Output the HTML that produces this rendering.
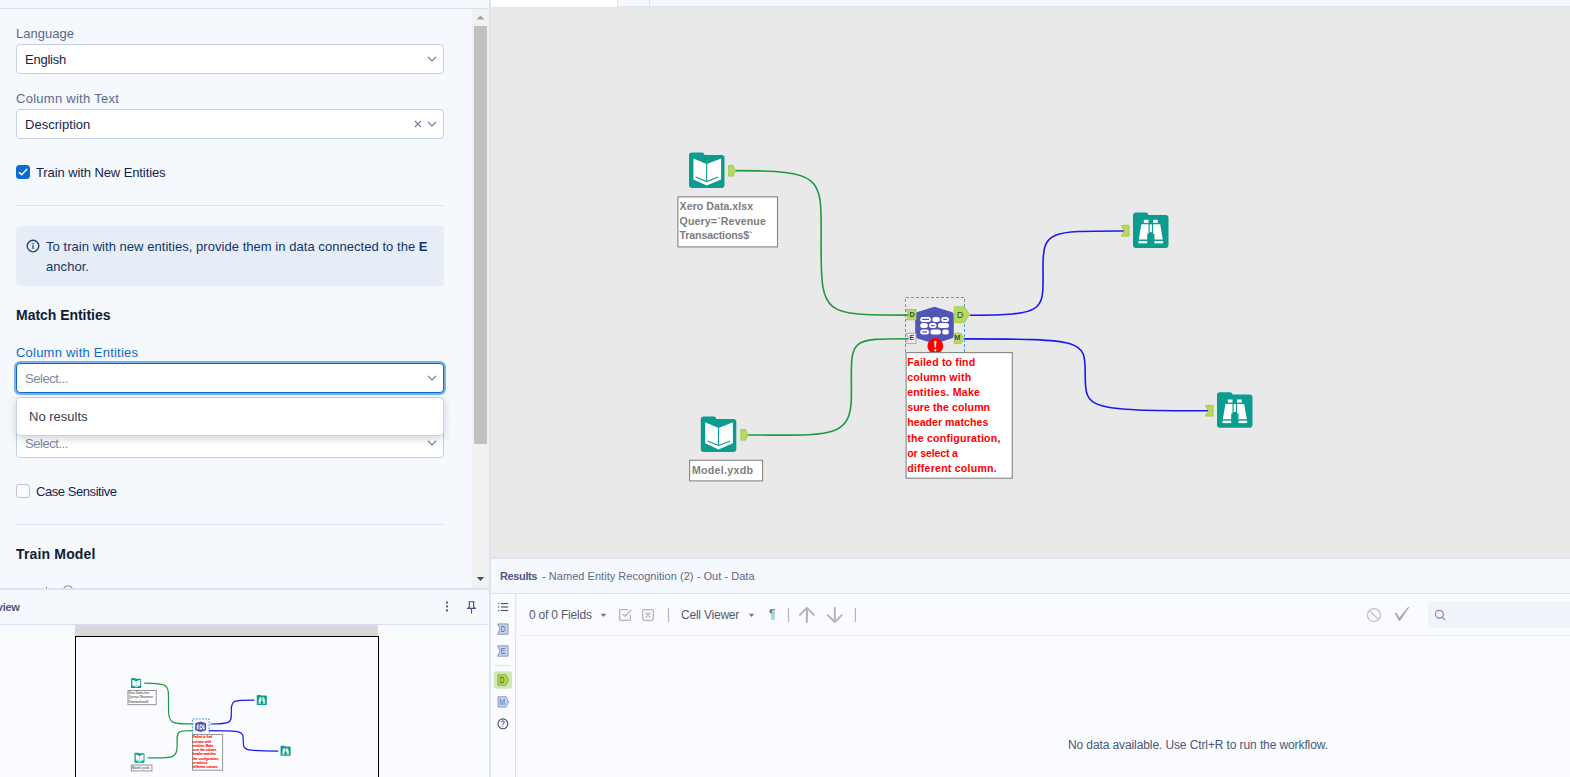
<!DOCTYPE html>
<html><head><meta charset="utf-8"><title>Designer</title>
<style>
*{box-sizing:border-box;margin:0;padding:0}
html,body{width:1570px;height:777px;overflow:hidden;background:#f5f8fd;font-family:"Liberation Sans",sans-serif;color:#0c2651}
.abs{position:absolute}
#left{position:absolute;left:0;top:0;width:489px;height:588px;background:#f5f8fd;overflow:hidden}
#canvas{position:absolute;left:491px;top:7px;width:1079px;height:550px;background:#e9e9e9;overflow:hidden}
#results{position:absolute;left:491px;top:559px;width:1079px;height:218px;background:#f5f8fd;overflow:hidden}
#overview{position:absolute;left:0;top:590px;width:489px;height:187px;background:#f5f8fd;overflow:hidden}
.vdiv{position:absolute;left:489px;top:0;width:2px;height:777px;background:#dce4f2}
.t{position:absolute;white-space:nowrap;line-height:1}
.lbl{font-size:13px;color:#5b6b8a}
.val{font-size:13px;color:#13264d}
.ph{font-size:13px;color:#7c89a6}
.sel{position:absolute;left:16px;width:428px;height:30px;background:#fff;border:1px solid #c3cfe6;border-radius:4px}
.h{font-size:14px;font-weight:bold;color:#101c33}
.hr{position:absolute;left:16px;width:428px;height:1px;background:#dde4f0}
svg{position:absolute;overflow:visible}
.conn{stroke-width:1.6}
.ann{font-family:"Liberation Sans",sans-serif;font-size:10.6px;font-weight:bold}
.mini .conn{stroke-width:4.3}
.mini .dash{stroke-width:3;stroke-dasharray:7,4}
.mini .abox{stroke-width:3.3;stroke:#8c8c8c}
.mini .ann{stroke-width:0.3px}
.ann{stroke-width:0}
.mini .nm{display:none}
</style></head><body>
<div id="left">
  <div class="abs" style="left:0;top:8px;width:489px;height:1px;background:#d7dff0;z-index:3"></div>
  <div class="t lbl" style="left:16px;top:27px;letter-spacing:0.022px;">Language</div>
  <div class="sel" style="top:44px"></div>
  <div class="t val" style="left:25px;top:53px;letter-spacing:-0.240px;">English</div>
  <svg style="left:427px;top:56px" width="10" height="6" viewBox="0 0 10 6"><path d="M1,0.9 L5,4.9 L9,0.9" fill="none" stroke="#6f7d9c" stroke-width="1.25"/></svg>
  <div class="t lbl" style="left:16px;top:92px;letter-spacing:0.270px;">Column with Text</div>
  <div class="sel" style="top:109px"></div>
  <div class="t val" style="left:25px;top:118px;letter-spacing:0.027px;">Description</div>
  <svg style="left:414px;top:120px" width="8" height="8" viewBox="0 0 8 8"><path d="M0.9,0.9 L7,7 M7,0.9 L0.9,7" fill="none" stroke="#6f7d9c" stroke-width="1.2"/></svg>
  <svg style="left:427px;top:121px" width="10" height="6" viewBox="0 0 10 6"><path d="M1,0.9 L5,4.9 L9,0.9" fill="none" stroke="#6f7d9c" stroke-width="1.25"/></svg>
  <div class="abs" style="left:16px;top:165px;width:14px;height:14px;background:#0c6cd0;border-radius:3.5px"></div>
  <svg style="left:16px;top:165px" width="14" height="14" viewBox="0 0 14 14"><path d="M3.3,7.5 L5.6,9.7 L10.8,4.3" fill="none" stroke="#fff" stroke-width="1.5" stroke-linecap="round" stroke-linejoin="round"/></svg>
  <div class="t val" style="left:36px;top:166px;letter-spacing:-0.097px;">Train with New Entities</div>
  <div class="hr" style="top:205px"></div>
  <div class="abs" style="left:16px;top:226px;width:428px;height:60px;background:#e6edf7;border-radius:4px"></div>
  <svg style="left:26px;top:239px" width="14" height="14" viewBox="0 0 14 14"><circle cx="7" cy="7" r="5.8" fill="none" stroke="#1d4275" stroke-width="1.35"/><rect x="6.35" y="6.2" width="1.3" height="3.8" fill="#1d4275"/><rect x="6.35" y="3.9" width="1.3" height="1.4" fill="#1d4275"/></svg>
  <div class="t val" style="left:46px;top:240px;letter-spacing:0.043px;color:#12356b;">To train with new entities, provide them in data connected to the <b>E</b></div>
  <div class="t val" style="left:46px;top:260px;letter-spacing:0.057px;color:#12356b;">anchor.</div>
  <div class="t h" style="left:16px;top:308px;letter-spacing:-0.031px;">Match Entities</div>
  <div class="t lbl" style="left:16px;top:346px;letter-spacing:0.222px;color:#1268c8;">Column with Entities</div>
  <div class="sel" style="top:428px"></div>
  <div class="t ph" style="left:25px;top:437px;letter-spacing:-0.446px;">Select...</div>
  <svg style="left:427px;top:440px" width="10" height="6" viewBox="0 0 10 6"><path d="M1,0.9 L5,4.9 L9,0.9" fill="none" stroke="#6f7d9c" stroke-width="1.25"/></svg>
  <div class="sel" style="top:363px;border-color:#0a6acb;box-shadow:0 0 0 2px rgba(25,118,210,.55)"></div>
  <div class="t ph" style="left:25px;top:372px;letter-spacing:-0.446px;">Select...</div>
  <svg style="left:427px;top:375px" width="10" height="6" viewBox="0 0 10 6"><path d="M1,0.9 L5,4.9 L9,0.9" fill="none" stroke="#6f7d9c" stroke-width="1.25"/></svg>
  <div class="abs" style="left:16px;top:397px;width:428px;height:39px;background:#fff;border:1px solid #c7d2e8;border-radius:4px;box-shadow:0 3px 8px rgba(40,50,80,.2)"></div>
  <div class="t val" style="left:29px;top:410px;letter-spacing:-0.003px;color:#343d4f;">No results</div>
  <div class="abs" style="left:16px;top:484px;width:14px;height:14px;background:#f9fbfe;border:1px solid #b9c5dc;border-radius:3px"></div>
  <div class="t val" style="left:36px;top:485px;letter-spacing:-0.440px;">Case Sensitive</div>
  <div class="hr" style="top:524px"></div>
  <div class="t h" style="left:16px;top:547px;letter-spacing:0.160px;">Train Model</div>
  <div class="abs" style="left:46px;top:587px;width:1.3px;height:1px;background:#3d4f9a"></div>
  <svg style="left:62px;top:585px" width="12" height="12" viewBox="0 0 12 12"><circle cx="6" cy="5.5" r="4.7" fill="none" stroke="#7f899c" stroke-width="1.1"/></svg>
  <!-- scrollbar -->
  <div class="abs" style="left:472px;top:9px;width:17px;height:579px;background:#f1f1f1"></div>
  <div class="abs" style="left:474px;top:26px;width:13px;height:418px;background:#c1c1c1"></div>
  <svg style="left:476px;top:15px" width="9" height="5" viewBox="0 0 9 5"><path d="M0.5,4.6 L4.5,0.6 L8.5,4.6 Z" fill="#a3a3a3"/></svg>
  <svg style="left:476px;top:577px" width="9" height="5" viewBox="0 0 9 5"><path d="M0.8,0 L4.5,4 L8.2,0 Z" fill="#505050"/></svg>
</div>
<div class="abs" style="left:0;top:588px;width:489px;height:2px;background:#dce4f2"></div>
<div id="overview">
  <div class="t " style="right:469.4px;top:11.5px;font-size:11px;font-weight:bold;color:#4a5a80;letter-spacing:-0.25px;">Overview</div>
  <svg style="left:445px;top:11px" width="4" height="11" viewBox="0 0 4 11"><circle cx="2" cy="1.6" r="1.1" fill="#3e4f78"/><circle cx="2" cy="5.5" r="1.1" fill="#3e4f78"/><circle cx="2" cy="9.4" r="1.1" fill="#3e4f78"/></svg>
  <svg style="left:466px;top:11px" width="11" height="13" viewBox="0 0 11 13"><path d="M2.4,0.7 H8.6 M3.4,0.7 V5.7 L1.8,7.4 H9.2 L7.6,5.7 V0.7 M5.5,7.4 V12.6" fill="none" stroke="#42537d" stroke-width="1.1"/></svg>
  <div class="abs" style="left:0;top:34px;width:489px;height:1px;background:#d7dff0"></div>
  <div class="abs" style="left:0;top:35px;width:489px;height:152px;background:#f9fbfe"></div>
  <div class="abs" style="left:75px;top:35px;width:303px;height:11px;background:#d9d9d9"></div>
  <div class="abs" style="left:75px;top:46px;width:304px;height:150px;border:1.3px solid #000;background:#f9fbfe"></div>
  <svg class="mini" style="left:0;top:0" width="489" height="187" viewBox="0 0 489 187"><g transform="translate(-63.87,44.8) scale(0.283)">
<path class="conn" d="M735.4,170.65 C827.4,170.65 821.1,177.4 821.1,246.4 C821.1,315.5 823.4,315.1 908.8,315.1" stroke="#1f9a3e" fill="none"/>
<path class="conn" d="M747.7,435 C828.7,435 851.4,439.7 851.4,395.9 C851.4,338.7 846.2,338.7 908.7,338.7" stroke="#1f9a3e" fill="none"/>
<path class="conn" d="M969.65,315.2 C1048.5,315.2 1043.0,310.6 1043.0,266.4 C1043.0,230.4 1049.6,231 1124.6,231" stroke="#1a1af0" fill="none"/>
<path class="conn" d="M963.9,338.9 C1086.0,338.9 1085.2,340.4 1085.2,374.4 C1085.2,409.0 1086.1,410.75 1208.5,410.75" stroke="#1a1af0" fill="none"/>
<g transform="translate(689,152.6)">
<path d="M3,0 H13 Q14.3,0 15,1.2 L15.6,2.4 H32.5 Q35.5,2.4 35.5,5.4 V32.5 Q35.5,35.5 32.5,35.5 H3 Q0,35.5 0,32.5 V3 Q0,0 3,0 Z" fill="#0a9d8f"/>
<path d="M4.4,5.8 L17.7,11.4 L32.1,5.8 V26.8 L17.7,32.9 L4.4,26.8 Z" fill="#fff"/>
<path d="M17.7,11.2 V29" stroke="#0a9d8f" stroke-width="1.1" fill="none"/>
<path d="M6.7,24.4 L17.7,29 L29.3,24.4" stroke="#0a9d8f" stroke-width="1.1" fill="none"/>
</g>
<g class="nm"><path d="M728.6,165.5 h4.6 l2.2,5.3 l-2.2,5.3 h-4.6 z" fill="#b8d95f" stroke="#a3c645" stroke-width="0.9" stroke-linejoin="round"/></g>
<g transform="translate(700.8,416.5)">
<path d="M3,0 H13 Q14.3,0 15,1.2 L15.6,2.4 H32.5 Q35.5,2.4 35.5,5.4 V32.5 Q35.5,35.5 32.5,35.5 H3 Q0,35.5 0,32.5 V3 Q0,0 3,0 Z" fill="#0a9d8f"/>
<path d="M4.4,5.8 L17.7,11.4 L32.1,5.8 V26.8 L17.7,32.9 L4.4,26.8 Z" fill="#fff"/>
<path d="M17.7,11.2 V29" stroke="#0a9d8f" stroke-width="1.1" fill="none"/>
<path d="M6.7,24.4 L17.7,29 L29.3,24.4" stroke="#0a9d8f" stroke-width="1.1" fill="none"/>
</g>
<g class="nm"><path d="M740.9,429.5 h4.6 l2.2,5.3 l-2.2,5.3 h-4.6 z" fill="#b8d95f" stroke="#a3c645" stroke-width="0.9" stroke-linejoin="round"/></g>
<g class="nm"><path d="M1121.3,225.3 h7.7 v10.8 h-7.7 l3,-5.4 z" fill="#b8d95f" stroke="#a3c645" stroke-width="0.9"/></g>
<g transform="translate(1133,212.5)">
<path d="M3,0 H13 Q14.3,0 15,1.2 L15.6,2.4 H32.5 Q35.5,2.4 35.5,5.4 V32.5 Q35.5,35.5 32.5,35.5 H3 Q0,35.5 0,32.5 V3 Q0,0 3,0 Z" fill="#0a9d8f"/>
<rect x="10.8" y="7.3" width="4.7" height="3.1" fill="#fff"/>
<rect x="20" y="7.3" width="4.7" height="3.1" fill="#fff"/>
<path d="M8.4,11.7 H15.5 V21.2 H14.2 V27 H5.8 Z" fill="#fff"/>
<path d="M27.2,11.7 H20.1 V21.2 H21.4 V27 H29.8 Z" fill="#fff"/>
<rect x="16.7" y="11.9" width="2.2" height="7.8" fill="#fff"/>
<rect x="5.5" y="28.5" width="8.7" height="2.4" fill="#fff"/>
<rect x="21.4" y="28.5" width="8.7" height="2.4" fill="#fff"/>
</g>
<g class="nm"><path d="M1205.4,405.3 h7.7 v10.8 h-7.7 l3,-5.4 z" fill="#b8d95f" stroke="#a3c645" stroke-width="0.9"/></g>
<g transform="translate(1217,392.2)">
<path d="M3,0 H13 Q14.3,0 15,1.2 L15.6,2.4 H32.5 Q35.5,2.4 35.5,5.4 V32.5 Q35.5,35.5 32.5,35.5 H3 Q0,35.5 0,32.5 V3 Q0,0 3,0 Z" fill="#0a9d8f"/>
<rect x="10.8" y="7.3" width="4.7" height="3.1" fill="#fff"/>
<rect x="20" y="7.3" width="4.7" height="3.1" fill="#fff"/>
<path d="M8.4,11.7 H15.5 V21.2 H14.2 V27 H5.8 Z" fill="#fff"/>
<path d="M27.2,11.7 H20.1 V21.2 H21.4 V27 H29.8 Z" fill="#fff"/>
<rect x="16.7" y="11.9" width="2.2" height="7.8" fill="#fff"/>
<rect x="5.5" y="28.5" width="8.7" height="2.4" fill="#fff"/>
<rect x="21.4" y="28.5" width="8.7" height="2.4" fill="#fff"/>
</g>
<path class="dash" d="M905.5,352 V297.5 H964.5 V352" fill="none" stroke="#2f8de4" stroke-width="0.85" stroke-dasharray="3,2"/>
<path d="M934.5,306.8 L951.6,311.9 Q953.8,312.6 953.8,314.9 V335.4 Q953.8,337.7 951.6,338.4 L934.5,343.7 L917.4,338.4 Q915.2,337.7 915.2,335.4 V314.9 Q915.2,312.6 917.4,311.9 Z" fill="#4f56b7"/>
<rect x="921.15" y="317.85" width="8.9" height="3.1" rx="1.55" fill="none" stroke="#fff" stroke-width="1.9"/>
<rect x="932.3" y="316.90" width="7.6" height="5.0" rx="2.5" fill="#fff"/>
<rect x="942.15" y="317.85" width="5.8" height="3.1" rx="1.55" fill="none" stroke="#fff" stroke-width="1.9"/>
<rect x="920.2" y="323.10" width="7.6" height="5.0" rx="2.5" fill="#fff"/>
<rect x="930.05" y="324.05" width="5.5" height="3.1" rx="1.55" fill="none" stroke="#fff" stroke-width="1.9"/>
<rect x="938" y="323.10" width="10.9" height="5.0" rx="2.5" fill="#fff"/>
<rect x="921.15" y="330.35" width="6.9" height="3.1" rx="1.55" fill="none" stroke="#fff" stroke-width="1.9"/>
<rect x="930.4" y="329.40" width="10.5" height="5.0" rx="2.5" fill="#fff"/>
<rect x="942.2" y="329.40" width="6.7" height="5.0" rx="2.5" fill="#fff"/>
<g class="nm">
<path d="M906,309.5 H916 V319.8 H906 L909,314.7 Z" fill="#b8d95f" stroke="#a3c645" stroke-width="0.9"/>
<text x="912" y="317.1" font-size="7.2" font-weight="bold" fill="#26504a" text-anchor="middle">D</text>
<path d="M906,333.3 H916 V343.6 H906 L909,338.5 Z" fill="#f1f1f1" stroke="#a9a9a9" stroke-width="1"/>
<text x="911.8" y="340.3" font-size="7.2" font-weight="bold" fill="#2f4656" text-anchor="middle">E</text>
<path d="M954.2,306.8 H964.6 L969.4,314.6 L964.6,322.4 H954.2 Z" fill="#b8d95f" stroke="#a3c645" stroke-width="0.9"/>
<text x="960" y="317.6" font-size="9.2" fill="#26504a" text-anchor="middle">D</text>
<path d="M954.2,333.3 H961 L963.8,338.5 L961,343.6 H954.2 Z" fill="#b8d95f" stroke="#a3c645" stroke-width="0.9"/>
<text x="957.3" y="340.1" font-size="7.2" font-weight="bold" fill="#26504a" text-anchor="middle">M</text>
<circle cx="935.3" cy="346" r="7.9" fill="#ff0000"/>
<path d="M934.1,341.3 Q935.3,340.4 936.5,341.3 L935.9,347.8 H934.7 Z" fill="#fff"/><circle cx="935.3" cy="350.3" r="1.15" fill="#fff"/>
</g>
<rect x="677.9" y="196.9" width="99.6" height="50" class="abox" fill="#fff" stroke="#858585" stroke-width="1.1"/>
<text class="ann" x="679.6" y="209.9" fill="#7d7d7d" stroke="#7d7d7d" textLength="73.5">Xero Data.xlsx</text>
<text class="ann" x="679.6" y="224.7" fill="#7d7d7d" stroke="#7d7d7d" textLength="86.2">Query=`Revenue</text>
<text class="ann" x="679.6" y="239.4" fill="#7d7d7d" stroke="#7d7d7d" textLength="73">Transactions$`</text>
<rect x="689.6" y="460.3" width="73" height="20.6" class="abox" fill="#fff" stroke="#858585" stroke-width="1.1"/>
<text class="ann" x="691.9" y="474.1" fill="#7d7d7d" stroke="#7d7d7d" textLength="61.1">Model.yxdb</text>
<rect x="906.1" y="352.6" width="106.2" height="125.6" class="abox" fill="#fff" stroke="#858585" stroke-width="1.1"/>
<text class="ann" x="907.2" y="366.0" fill="#ff0000" stroke="#ff0000" textLength="68">Failed to find</text>
<text class="ann" x="907.2" y="381.1" fill="#ff0000" stroke="#ff0000" textLength="64">column with</text>
<text class="ann" x="907.2" y="396.2" fill="#ff0000" stroke="#ff0000" textLength="72.8">entities. Make</text>
<text class="ann" x="907.2" y="411.3" fill="#ff0000" stroke="#ff0000" textLength="82.9">sure the column</text>
<text class="ann" x="907.2" y="426.4" fill="#ff0000" stroke="#ff0000" textLength="81.1">header matches</text>
<text class="ann" x="907.2" y="441.5" fill="#ff0000" stroke="#ff0000" textLength="93.2">the configuration,</text>
<text class="ann" x="907.2" y="456.6" fill="#ff0000" stroke="#ff0000" textLength="50.8">or select a</text>
<text class="ann" x="907.2" y="471.7" fill="#ff0000" stroke="#ff0000" textLength="89.5">different column.</text>
  </g></svg>
</div>
<div class="vdiv"></div>
<div class="abs" style="left:491px;top:0;width:1079px;height:7px;background:#f5f8fd;border-bottom:1px solid #dce4f2"></div>
<div class="abs" style="left:491px;top:0;width:126px;height:7px;background:#fff"></div>
<div class="abs" style="left:617px;top:0;width:33px;height:6px;background:#f5f8fd;border-left:1px solid #dce4f2;border-right:1px solid #dce4f2"></div>
<div id="canvas">
  <svg style="left:-491px;top:-7px" width="1570" height="777" viewBox="0 0 1570 777">
<path class="conn" d="M735.4,170.65 C827.4,170.65 821.1,177.4 821.1,246.4 C821.1,315.5 823.4,315.1 908.8,315.1" stroke="#1f9a3e" fill="none"/>
<path class="conn" d="M747.7,435 C828.7,435 851.4,439.7 851.4,395.9 C851.4,338.7 846.2,338.7 908.7,338.7" stroke="#1f9a3e" fill="none"/>
<path class="conn" d="M969.65,315.2 C1048.5,315.2 1043.0,310.6 1043.0,266.4 C1043.0,230.4 1049.6,231 1124.6,231" stroke="#1a1af0" fill="none"/>
<path class="conn" d="M963.9,338.9 C1086.0,338.9 1085.2,340.4 1085.2,374.4 C1085.2,409.0 1086.1,410.75 1208.5,410.75" stroke="#1a1af0" fill="none"/>
<g transform="translate(689,152.6)">
<path d="M3,0 H13 Q14.3,0 15,1.2 L15.6,2.4 H32.5 Q35.5,2.4 35.5,5.4 V32.5 Q35.5,35.5 32.5,35.5 H3 Q0,35.5 0,32.5 V3 Q0,0 3,0 Z" fill="#0a9d8f"/>
<path d="M4.4,5.8 L17.7,11.4 L32.1,5.8 V26.8 L17.7,32.9 L4.4,26.8 Z" fill="#fff"/>
<path d="M17.7,11.2 V29" stroke="#0a9d8f" stroke-width="1.1" fill="none"/>
<path d="M6.7,24.4 L17.7,29 L29.3,24.4" stroke="#0a9d8f" stroke-width="1.1" fill="none"/>
</g>
<g class="nm"><path d="M728.6,165.5 h4.6 l2.2,5.3 l-2.2,5.3 h-4.6 z" fill="#b8d95f" stroke="#a3c645" stroke-width="0.9" stroke-linejoin="round"/></g>
<g transform="translate(700.8,416.5)">
<path d="M3,0 H13 Q14.3,0 15,1.2 L15.6,2.4 H32.5 Q35.5,2.4 35.5,5.4 V32.5 Q35.5,35.5 32.5,35.5 H3 Q0,35.5 0,32.5 V3 Q0,0 3,0 Z" fill="#0a9d8f"/>
<path d="M4.4,5.8 L17.7,11.4 L32.1,5.8 V26.8 L17.7,32.9 L4.4,26.8 Z" fill="#fff"/>
<path d="M17.7,11.2 V29" stroke="#0a9d8f" stroke-width="1.1" fill="none"/>
<path d="M6.7,24.4 L17.7,29 L29.3,24.4" stroke="#0a9d8f" stroke-width="1.1" fill="none"/>
</g>
<g class="nm"><path d="M740.9,429.5 h4.6 l2.2,5.3 l-2.2,5.3 h-4.6 z" fill="#b8d95f" stroke="#a3c645" stroke-width="0.9" stroke-linejoin="round"/></g>
<g class="nm"><path d="M1121.3,225.3 h7.7 v10.8 h-7.7 l3,-5.4 z" fill="#b8d95f" stroke="#a3c645" stroke-width="0.9"/></g>
<g transform="translate(1133,212.5)">
<path d="M3,0 H13 Q14.3,0 15,1.2 L15.6,2.4 H32.5 Q35.5,2.4 35.5,5.4 V32.5 Q35.5,35.5 32.5,35.5 H3 Q0,35.5 0,32.5 V3 Q0,0 3,0 Z" fill="#0a9d8f"/>
<rect x="10.8" y="7.3" width="4.7" height="3.1" fill="#fff"/>
<rect x="20" y="7.3" width="4.7" height="3.1" fill="#fff"/>
<path d="M8.4,11.7 H15.5 V21.2 H14.2 V27 H5.8 Z" fill="#fff"/>
<path d="M27.2,11.7 H20.1 V21.2 H21.4 V27 H29.8 Z" fill="#fff"/>
<rect x="16.7" y="11.9" width="2.2" height="7.8" fill="#fff"/>
<rect x="5.5" y="28.5" width="8.7" height="2.4" fill="#fff"/>
<rect x="21.4" y="28.5" width="8.7" height="2.4" fill="#fff"/>
</g>
<g class="nm"><path d="M1205.4,405.3 h7.7 v10.8 h-7.7 l3,-5.4 z" fill="#b8d95f" stroke="#a3c645" stroke-width="0.9"/></g>
<g transform="translate(1217,392.2)">
<path d="M3,0 H13 Q14.3,0 15,1.2 L15.6,2.4 H32.5 Q35.5,2.4 35.5,5.4 V32.5 Q35.5,35.5 32.5,35.5 H3 Q0,35.5 0,32.5 V3 Q0,0 3,0 Z" fill="#0a9d8f"/>
<rect x="10.8" y="7.3" width="4.7" height="3.1" fill="#fff"/>
<rect x="20" y="7.3" width="4.7" height="3.1" fill="#fff"/>
<path d="M8.4,11.7 H15.5 V21.2 H14.2 V27 H5.8 Z" fill="#fff"/>
<path d="M27.2,11.7 H20.1 V21.2 H21.4 V27 H29.8 Z" fill="#fff"/>
<rect x="16.7" y="11.9" width="2.2" height="7.8" fill="#fff"/>
<rect x="5.5" y="28.5" width="8.7" height="2.4" fill="#fff"/>
<rect x="21.4" y="28.5" width="8.7" height="2.4" fill="#fff"/>
</g>
<path class="dash" d="M905.5,352 V297.5 H964.5 V352" fill="none" stroke="#2f8de4" stroke-width="0.85" stroke-dasharray="3,2"/>
<path d="M934.5,306.8 L951.6,311.9 Q953.8,312.6 953.8,314.9 V335.4 Q953.8,337.7 951.6,338.4 L934.5,343.7 L917.4,338.4 Q915.2,337.7 915.2,335.4 V314.9 Q915.2,312.6 917.4,311.9 Z" fill="#4f56b7"/>
<rect x="921.15" y="317.85" width="8.9" height="3.1" rx="1.55" fill="none" stroke="#fff" stroke-width="1.9"/>
<rect x="932.3" y="316.90" width="7.6" height="5.0" rx="2.5" fill="#fff"/>
<rect x="942.15" y="317.85" width="5.8" height="3.1" rx="1.55" fill="none" stroke="#fff" stroke-width="1.9"/>
<rect x="920.2" y="323.10" width="7.6" height="5.0" rx="2.5" fill="#fff"/>
<rect x="930.05" y="324.05" width="5.5" height="3.1" rx="1.55" fill="none" stroke="#fff" stroke-width="1.9"/>
<rect x="938" y="323.10" width="10.9" height="5.0" rx="2.5" fill="#fff"/>
<rect x="921.15" y="330.35" width="6.9" height="3.1" rx="1.55" fill="none" stroke="#fff" stroke-width="1.9"/>
<rect x="930.4" y="329.40" width="10.5" height="5.0" rx="2.5" fill="#fff"/>
<rect x="942.2" y="329.40" width="6.7" height="5.0" rx="2.5" fill="#fff"/>
<g class="nm">
<path d="M906,309.5 H916 V319.8 H906 L909,314.7 Z" fill="#b8d95f" stroke="#a3c645" stroke-width="0.9"/>
<text x="912" y="317.1" font-size="7.2" font-weight="bold" fill="#26504a" text-anchor="middle">D</text>
<path d="M906,333.3 H916 V343.6 H906 L909,338.5 Z" fill="#f1f1f1" stroke="#a9a9a9" stroke-width="1"/>
<text x="911.8" y="340.3" font-size="7.2" font-weight="bold" fill="#2f4656" text-anchor="middle">E</text>
<path d="M954.2,306.8 H964.6 L969.4,314.6 L964.6,322.4 H954.2 Z" fill="#b8d95f" stroke="#a3c645" stroke-width="0.9"/>
<text x="960" y="317.6" font-size="9.2" fill="#26504a" text-anchor="middle">D</text>
<path d="M954.2,333.3 H961 L963.8,338.5 L961,343.6 H954.2 Z" fill="#b8d95f" stroke="#a3c645" stroke-width="0.9"/>
<text x="957.3" y="340.1" font-size="7.2" font-weight="bold" fill="#26504a" text-anchor="middle">M</text>
<circle cx="935.3" cy="346" r="7.9" fill="#ff0000"/>
<path d="M934.1,341.3 Q935.3,340.4 936.5,341.3 L935.9,347.8 H934.7 Z" fill="#fff"/><circle cx="935.3" cy="350.3" r="1.15" fill="#fff"/>
</g>
<rect x="677.9" y="196.9" width="99.6" height="50" class="abox" fill="#fff" stroke="#858585" stroke-width="1.1"/>
<text class="ann" x="679.6" y="209.9" fill="#7d7d7d" stroke="#7d7d7d" textLength="73.5">Xero Data.xlsx</text>
<text class="ann" x="679.6" y="224.7" fill="#7d7d7d" stroke="#7d7d7d" textLength="86.2">Query=`Revenue</text>
<text class="ann" x="679.6" y="239.4" fill="#7d7d7d" stroke="#7d7d7d" textLength="73">Transactions$`</text>
<rect x="689.6" y="460.3" width="73" height="20.6" class="abox" fill="#fff" stroke="#858585" stroke-width="1.1"/>
<text class="ann" x="691.9" y="474.1" fill="#7d7d7d" stroke="#7d7d7d" textLength="61.1">Model.yxdb</text>
<rect x="906.1" y="352.6" width="106.2" height="125.6" class="abox" fill="#fff" stroke="#858585" stroke-width="1.1"/>
<text class="ann" x="907.2" y="366.0" fill="#ff0000" stroke="#ff0000" textLength="68">Failed to find</text>
<text class="ann" x="907.2" y="381.1" fill="#ff0000" stroke="#ff0000" textLength="64">column with</text>
<text class="ann" x="907.2" y="396.2" fill="#ff0000" stroke="#ff0000" textLength="72.8">entities. Make</text>
<text class="ann" x="907.2" y="411.3" fill="#ff0000" stroke="#ff0000" textLength="82.9">sure the column</text>
<text class="ann" x="907.2" y="426.4" fill="#ff0000" stroke="#ff0000" textLength="81.1">header matches</text>
<text class="ann" x="907.2" y="441.5" fill="#ff0000" stroke="#ff0000" textLength="93.2">the configuration,</text>
<text class="ann" x="907.2" y="456.6" fill="#ff0000" stroke="#ff0000" textLength="50.8">or select a</text>
<text class="ann" x="907.2" y="471.7" fill="#ff0000" stroke="#ff0000" textLength="89.5">different column.</text>
  </svg>
</div>
<div class="abs" style="left:491px;top:557px;width:1079px;height:2px;background:#dce4f2"></div>
<div id="results">
  <div class="abs" style="left:0;top:35px;width:1079px;height:183px;background:#f9fbfe"></div>
  <div class="abs" style="left:0;top:34px;width:1079px;height:1px;background:#d7dff0"></div>
  <div class="abs" style="left:24px;top:35px;width:1px;height:183px;background:#dce4f2"></div>
  <div class="abs" style="left:25px;top:35px;width:1054px;height:42px;border-bottom:1px solid #ededee;border-left:1px solid #f2f3f5;border-bottom-left-radius:4px"></div>
  <div class="t " style="left:9px;top:12px;letter-spacing:-0.375px;font-size:11px;font-weight:bold;color:#4a5b86;">Results</div>
  <div class="t " style="left:51px;top:12px;letter-spacing:0.038px;font-size:11px;color:#5b6b8a;">- Named Entity Recognition (2) - Out - Data</div>
  <div class="t " style="left:38px;top:50px;letter-spacing:-0.198px;font-size:12px;color:#535d70;">0 of 0 Fields</div>
  <div class="t " style="left:190px;top:50px;letter-spacing:-0.217px;font-size:12px;color:#535d70;">Cell Viewer</div>
  <svg style="left:-491px;top:-559px" width="1570" height="777" viewBox="0 0 1570 777">
<path d="M501,603.6 H508.2" stroke="#3e4f78" stroke-width="1.1"/><rect x="498.1" y="603.0" width="1.2" height="1.2" fill="#3e4f78"/>
<path d="M501,607.0 H508.2" stroke="#3e4f78" stroke-width="1.1"/><rect x="498.1" y="606.4" width="1.2" height="1.2" fill="#3e4f78"/>
<path d="M501,610.5 H508.2" stroke="#3e4f78" stroke-width="1.1"/><rect x="498.1" y="609.9" width="1.2" height="1.2" fill="#3e4f78"/>
<path d="M497.6,623.9 H508.1 V634.3 H497.6 L499.9,629.1 Z" fill="#c6d1e9" stroke="#8497c2" stroke-width="0.9"/><text x="503.1" y="632.2" font-size="8.6" fill="#566b9b" text-anchor="middle" textLength="4.7" lengthAdjust="spacingAndGlyphs">D</text>
<path d="M497.6,645.8 H508.1 V656.1999999999999 H497.6 L499.9,651.0 Z" fill="#c6d1e9" stroke="#8497c2" stroke-width="0.9"/><text x="503.1" y="654.1" font-size="8.6" fill="#566b9b" text-anchor="middle" textLength="4.7" lengthAdjust="spacingAndGlyphs">E</text>
<path d="M494,665.5 H511" stroke="#dce4f2" stroke-width="1"/>
<rect x="494" y="671.2" width="18" height="17.5" rx="3" fill="#cfe7b6"/>
<path d="M498,674.8 H506 L508.6,680 L506,685.2 H498 Z" fill="#b3d64a" stroke="#8aab2f" stroke-width="0.9"/>
<text x="502" y="683.1" font-size="8.6" fill="#2f6b38" text-anchor="middle" textLength="4.7" lengthAdjust="spacingAndGlyphs">D</text>
<path d="M498,696.7 H506 L508.6,701.9 L506,707.1 H498 Z" fill="#c6d1e9" stroke="#8497c2" stroke-width="0.9"/>
<text x="502.2" y="705" font-size="8.6" fill="#5777b6" text-anchor="middle" textLength="5.8" lengthAdjust="spacingAndGlyphs">M</text>
<circle cx="502.9" cy="723.8" r="4.9" fill="none" stroke="#3e4f78" stroke-width="1.1"/>
<path d="M501.4,722.3 Q501.5,720.9 502.9,720.9 Q504.4,720.9 504.4,722.2 Q504.4,723.1 502.9,723.7 V724.6" fill="none" stroke="#3e4f78" stroke-width="1"/><rect x="502.4" y="725.6" width="1" height="1" fill="#3e4f78"/>
<path d="M600.6,613.7 H606.4 L603.5,616.9 Z" fill="#7a7a7a"/>
<path d="M748.6,613.7 H754.4 L751.5,616.9 Z" fill="#7a7a7a"/>
<g transform="translate(617.85,607.85) scale(0.596)" fill="none" stroke="#b4b6b4" stroke-width="2.3" stroke-linecap="round" stroke-linejoin="round"><polyline points="9 11 12 14 22 4"/><path d="M21 12v7a2 2 0 0 1-2 2H5a2 2 0 0 1-2-2V5a2 2 0 0 1 2-2h11"/></g>
<g transform="translate(640.85,607.85) scale(0.596)" fill="none" stroke="#b4b6b4" stroke-width="2.3" stroke-linecap="round" stroke-linejoin="round"><rect x="3" y="3" width="18" height="18" rx="3"/><path d="M9 9l6 6M15 9l-6 6" stroke-width="2.6"/></g>
<path d="M668.5,608 V622" stroke="#b4b6b4" stroke-width="1.2"/>
<path d="M788.5,608 V622" stroke="#b4b6b4" stroke-width="1.2"/>
<path d="M855.4,608 V622" stroke="#b4b6b4" stroke-width="1.2"/>
<g transform="translate(794.9,602.9)" fill="none" stroke="#b4b6b4" stroke-width="2" stroke-linecap="round" stroke-linejoin="round"><path d="M12 19V5M5 12l7-7 7 7"/></g>
<g transform="translate(822.8,603.1)" fill="none" stroke="#b4b6b4" stroke-width="2" stroke-linecap="round" stroke-linejoin="round"><path d="M12 5v14M19 12l-7 7-7-7"/></g>
<circle cx="1373.95" cy="615.05" r="6.5" fill="none" stroke="#c2c3c2" stroke-width="1.35"/><path d="M1369.4,610.5 L1378.5,619.6" stroke="#c2c3c2" stroke-width="1.35"/>
<path d="M1394.9,613.5 L1396.4,612.6 L1399.5,617.6 L1408.3,606.8 L1409.1,607.4 L1399.9,621.1 L1398.9,621.1 Z" fill="#a9aaa9"/>
<path d="M1570,601 H1432 Q1428,601 1428,605 V624 Q1428,628 1432,628 H1570 Z" fill="#f0f3f9"/>
<circle cx="1439.4" cy="614.25" r="3.9" fill="none" stroke="#758ab6" stroke-width="1.15"/><path d="M1442.3,617.2 L1444.8,619.7" stroke="#758ab6" stroke-width="1.15" stroke-linecap="round"/>
  </svg>
  <div class="t " style="left:278px;top:49px;font-size:12px;color:#7a7a7a;">¶</div>
  <div class="t " style="left:577px;top:180px;letter-spacing:-0.105px;font-size:12px;color:#4a5878;">No data available. Use Ctrl+R to run the workflow.</div>
</div>
</body></html>
